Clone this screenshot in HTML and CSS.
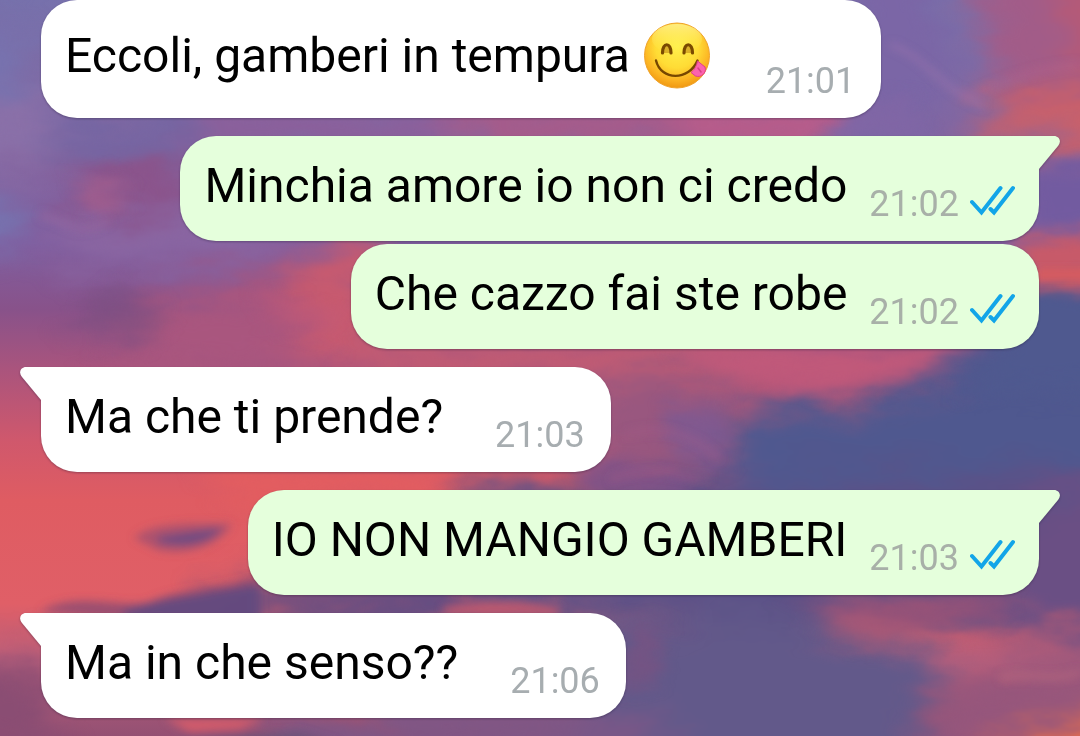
FILE: index.html
```html
<!DOCTYPE html>
<html lang="it">
<head>
<meta charset="utf-8">
<meta name="viewport" content="width=device-width, initial-scale=1">
<title>Chat</title>
<link rel="stylesheet" href="styles.css">
</head>
<body>
<svg class="wallpaper" viewBox="0 0 1080 736" preserveAspectRatio="none" aria-hidden="true">
  <defs>
    <filter id="soft" filterUnits="userSpaceOnUse" x="-80" y="-80" width="1240" height="900" color-interpolation-filters="sRGB">
      <feGaussianBlur stdDeviation="17" result="b"/>
      <feTurbulence type="fractalNoise" baseFrequency=".012 .03" numOctaves="4" seed="7" result="n"/>
      <feDisplacementMap in="b" in2="n" scale="60" xChannelSelector="R" yChannelSelector="G"/>
      <feGaussianBlur stdDeviation="1"/>
    </filter>
    <filter id="mid" filterUnits="userSpaceOnUse" x="-80" y="-80" width="1240" height="900" color-interpolation-filters="sRGB">
      <feGaussianBlur stdDeviation="9" result="b"/>
      <feTurbulence type="fractalNoise" baseFrequency=".014 .04" numOctaves="4" seed="3" result="n"/>
      <feDisplacementMap in="b" in2="n" scale="30" xChannelSelector="R" yChannelSelector="G"/>
      <feGaussianBlur stdDeviation="1"/>
    </filter>
    <filter id="fine" x="-50%" y="-50%" width="200%" height="200%"><feGaussianBlur stdDeviation="4"/></filter>
    <linearGradient id="sky" x1="0" y1="0" x2="0" y2="1">
      <stop offset="0" stop-color="#7771ac"/>
      <stop offset=".2" stop-color="#85659f"/>
      <stop offset=".33" stop-color="#805fa0"/>
      <stop offset=".42" stop-color="#88528a"/>
      <stop offset=".5" stop-color="#a9547d"/>
      <stop offset=".6" stop-color="#d0586c"/>
      <stop offset=".68" stop-color="#df5c62"/>
      <stop offset=".82" stop-color="#e05f67"/>
      <stop offset=".9" stop-color="#b95f7b"/>
      <stop offset="1" stop-color="#945073"/>
    </linearGradient>
  </defs>
  <rect width="1080" height="736" fill="url(#sky)"/>
  <g filter="url(#soft)">
    <path fill="#7772ae" d="M-40 40 20 20 40 90-40 120Z"/>
    <path fill="#8a70a8" d="M-40 110 50 90 90 140-40 170Z"/>
    <path fill="#6f66a4" d="M60 118H190V150H60Z"/>
    <path fill="#8b5289" d="M80 165 190 155V215L60 205Z"/>
    <path fill="#7574b0" d="M-40 190 20 195 30 240-40 250Z"/>
    <path fill="#8a66a2" d="M60 215 260 215 280 255 80 270Z"/>
    <path fill="#8b5f9b" d="M190 105H450V150H190Z"/>
    <path fill="#a95a88" d="M450 100H700V150H450Z"/>
    <path fill="#c05a86" d="M690 105H830V150H690Z"/>
    <path fill="#7b66a6" d="M850-60 930-60 960 90 900 160 840 140Z"/>
    <path fill="#a25c88" d="M960-60 1140-60V110L1000 90Z"/>
    <path fill="#b45a78" d="M1050-60 1140-60V90L1060 60Z"/>
    <path fill="#c9606a" d="M1000 95 1140 85V160L1040 150 960 135Z"/>
    <path fill="#a9567e" d="M150 295 300 265 380 245V380H100Z"/>
    <path fill="#c75a6f" d="M300 250 380 235V370L290 350Z"/>
    <path fill="#c45c72" d="M360 335H760V380H360Z"/>
    <path fill="#98577f" d="M590 380 740 360 790 500 590 500Z"/>
    <path fill="#4f588f" d="M720 415 850 400 960 350 1040 290H1140V500L800 505 730 480Z"/>
    <path fill="#5b5187" d="M470 480 620 490 830 480 1080 470V610L470 620Z"/>
    <path fill="#5d4c83" d="M210 595 480 560V625H200Z"/>
    <path fill="#6a4f84" d="M1030 490 1140 480V640L990 640Z"/>
    <path fill="#62598a" d="M590 625 800 610 950 660 900 790 560 790Z"/>
    <path fill="#8a4d73" d="M-60 670 50 660 60 760-60 760Z"/>
    <path fill="#7c5787" d="M280 715 660 710V760H270Z"/>
    <path fill="#95567c" d="M960 685 1140 650V760H910Z"/>
    <path fill="#e06b51" d="M1000 748 1140 700V800H950Z"/>
  </g>
  <g filter="url(#mid)">
    <path fill="#725ba0" d="M1035 164 1120 166V225L1025 230Z"/>
    <path fill="#c75a69" d="M1025 236 1120 230V286L1020 288Z"/>
    <path fill="#4f598f" d="M1035 294 1120 294V390H960L1000 350Z"/>
    <path fill="#c0597a" d="M670 345 975 345 920 370 840 392 740 380Z"/>
    <path fill="#8066a5" d="M845 116 910 100 930 145 830 142Z"/>
    <path fill="#e25d60" d="M190 470H450L430 492 250 510Z"/>
    <path fill="#7d5289" d="M585 472H690V492H580Z"/>
    <path fill="#775a95" opacity=".7" d="M670 400 730 410 720 470 670 450Z"/>
    <path fill="#a85876" d="M820 618 860 604 925 610 915 632 870 645Z"/>
    <path fill="#8d5079" opacity=".8" d="M780 602 1010 590 1000 625 940 630Z"/>
    <path fill="#7c5180" opacity=".7" d="M630 625 655 620 660 680 625 690Z"/>
    <path fill="#b0618a" opacity=".6" d="M75 180 130 190 90 215Z"/>
    <path fill="#c45a78" opacity=".5" d="M250 290 340 315 340 345 280 320Z"/>
    <path fill="#794f80" opacity=".6" d="M110 290 170 305 140 345 60 330Z"/>
  </g>
  <g filter="url(#fine)">
    <path fill="#a0506f" opacity=".8" d="M134 538C155 520 205 524 232 524 219 547 185 556 158 550Z"/>
    <path fill="#6d4b82" d="M158 537 222 528C210 543 185 548 158 542Z"/>
    <path fill="#8a4a72" opacity=".8" d="M40 612C75 590 120 609 150 602 180 587 230 588 255 577V620H130Z"/>
    <path fill="#5f4a80" opacity=".9" d="M120 612C160 598 220 592 260 584V620H130Z"/>
    <path fill="#b9586f" d="M442 608C480 598 520 600 562 608L555 616H448Z"/>
    <path fill="#d45c6a" d="M165 719H265L240 729 190 732Z"/>
    <path fill="#6d5279" d="M180 738 300 732 340 744H180Z"/>
    <path fill="none" stroke="#a477b0" stroke-width="5" opacity=".5" d="M890 45C925 55 940 90 985 106"/>
    <path fill="none" stroke="#bc658c" stroke-width="6" opacity=".4" d="M960 95C980 98 1010 70 1080 65"/>
    <path fill="none" stroke="#9c699f" stroke-width="6" opacity=".5" d="M40 215C65 220 75 240 110 220"/>
    <path fill="none" stroke="#a75c88" stroke-width="6" opacity=".4" d="M625 435C655 425 690 430 720 460M610 480C650 460 680 480 710 478"/>
    <path fill="none" stroke="#b96a80" stroke-width="6" opacity=".6" d="M1000 678C1020 670 1050 684 1080 672"/>
    <path fill="#de5c5a" opacity=".8" d="M1035 270H1090V280H1035Z"/>
  </g>
</svg>

<main class="chat">
  <article class="bubble in">
    <p class="text">Eccoli, gamberi in tempura <svg class="emoji" viewBox="0 0 66 69" role="img" aria-label="Faccina che si lecca i baffi">
      <defs>
        <radialGradient id="face" cx=".5" cy=".36" r=".66">
          <stop offset="0" stop-color="#fff04c"/><stop offset=".5" stop-color="#ffdc35"/><stop offset=".78" stop-color="#fcb423"/><stop offset="1" stop-color="#ee930f"/>
        </radialGradient>
        <linearGradient id="shine" x1="0" y1="0" x2="0" y2="1"><stop offset="0" stop-color="#fff3a0" stop-opacity=".7"/><stop offset="1" stop-color="#fff04a" stop-opacity="0"/></linearGradient>
      </defs>
      <circle cx="33" cy="33.500" r="32.500" fill="url(#face)" stroke="#efa32c"/>
      <ellipse cx="33" cy="17" rx="25" ry="15" fill="url(#shine)"/>
      <path d="M18.500 31C18.500 20 27 20 27 31M40 31C40 20 48.500 20 48.500 31" fill="#b87a10" fill-opacity=".5" stroke="#7a4a00" stroke-width="3.200" stroke-linecap="round"/>
      <path d="M12 38.500C17 59 45 59 53.500 38.500" fill="none" stroke="#774700" stroke-width="2.400" stroke-linecap="round"/>
      <path d="M53.500 39 61 45C63 51 57 56 51.500 54L47 50.500C50.500 48 53 43 53.500 39Z" fill="#fb63ae" stroke="#e23d8b"/>
      <path d="M54 46 57 50" stroke="#d93f88" stroke-width="1.500" stroke-linecap="round"/>
    </svg></p>
    <time class="meta">21:01</time>
  </article>

  <article class="bubble out tailed">
    <svg class="tail" viewBox="0 0 22 34" aria-hidden="true"><path d="M0 0H16C21 0 24 5 20 10L1 33H0Z"/></svg>
    <p class="text">Minchia amore io non ci credo</p>
    <div class="meta"><time>21:02</time><svg class="ticks" viewBox="0 0 45 31" role="img" aria-label="Letto"><path d="M2 17 11.500 27.500 30.500 3M20.500 24 24 27.500 43 3"/></svg></div>
  </article>

  <article class="bubble out follow">
    <p class="text">Che cazzo fai ste robe</p>
    <div class="meta"><time>21:02</time><svg class="ticks" viewBox="0 0 45 31" role="img" aria-label="Letto"><path d="M2 17 11.500 27.500 30.500 3M20.500 24 24 27.500 43 3"/></svg></div>
  </article>

  <article class="bubble in tailed">
    <svg class="tail" viewBox="0 0 22 34" aria-hidden="true"><path d="M22 0H6C1 0-2 5 2 10L21 33H22Z"/></svg>
    <p class="text">Ma che ti prende?</p>
    <time class="meta">21:03</time>
  </article>

  <article class="bubble out tailed">
    <svg class="tail" viewBox="0 0 22 34" aria-hidden="true"><path d="M0 0H16C21 0 24 5 20 10L1 33H0Z"/></svg>
    <p class="text">IO NON MANGIO GAMBERI</p>
    <div class="meta"><time>21:03</time><svg class="ticks" viewBox="0 0 45 31" role="img" aria-label="Letto"><path d="M2 17 11.500 27.500 30.500 3M20.500 24 24 27.500 43 3"/></svg></div>
  </article>

  <article class="bubble in tailed">
    <svg class="tail" viewBox="0 0 22 34" aria-hidden="true"><path d="M22 0H6C1 0-2 5 2 10L21 33H22Z"/></svg>
    <p class="text">Ma in che senso??</p>
    <time class="meta">21:06</time>
  </article>
</main>
</body>
</html>
```

FILE: styles.css
```css
* {
  box-sizing: border-box;
}

body {
  margin: 0;
  font-family: Roboto, "Liberation Sans", sans-serif;
  color: #000;
  background: #85659f;
}

.wallpaper {
  position: fixed;
  inset: 0;
  width: 100%;
  height: 100%;
}

.chat {
  position: relative;
  display: flex;
  flex-direction: column;
  gap: 18px;
  padding: 0 41px 18px;
}

.bubble {
  position: relative;
  display: flex;
  align-items: flex-end;
  padding: 22px 24px 16px;
  border-radius: 36px;
  filter: drop-shadow(0 1px 1px rgba(30, 20, 50, 0.35));
}

.in {
  align-self: flex-start;
  gap: 52px;
  padding-right: 26px;
  background: #fff;
}

.out {
  align-self: flex-end;
  gap: 22px;
  background: #e5ffdc;
}

.follow {
  margin-top: -15px;
}

.in.tailed {
  border-top-left-radius: 0;
}

.out.tailed {
  border-top-right-radius: 0;
}

.tail {
  position: absolute;
  top: 0;
  width: 22px;
  height: 34px;
}

.in .tail {
  right: 100%;
  margin-right: -1px;
  fill: #fff;
}

.out .tail {
  left: 100%;
  margin-left: -1px;
  fill: #e5ffdc;
}

.text {
  margin: 0 0 11px;
  font-size: 48px;
  line-height: 56px;
}

.emoji {
  width: 66px;
  height: 69px;
  margin: 0 4px 0 2px;
  vertical-align: -19px;
}

.meta {
  display: flex;
  align-items: baseline;
  gap: 11px;
  font-size: 36px;
  line-height: 42px;
  color: #a7adb0;
}

.out .meta {
  color: #a8b0a8;
}

.ticks {
  width: 45px;
  height: 31px;
  fill: none;
  stroke: #12a5e8;
  stroke-width: 4;
  stroke-linecap: round;
}
```
